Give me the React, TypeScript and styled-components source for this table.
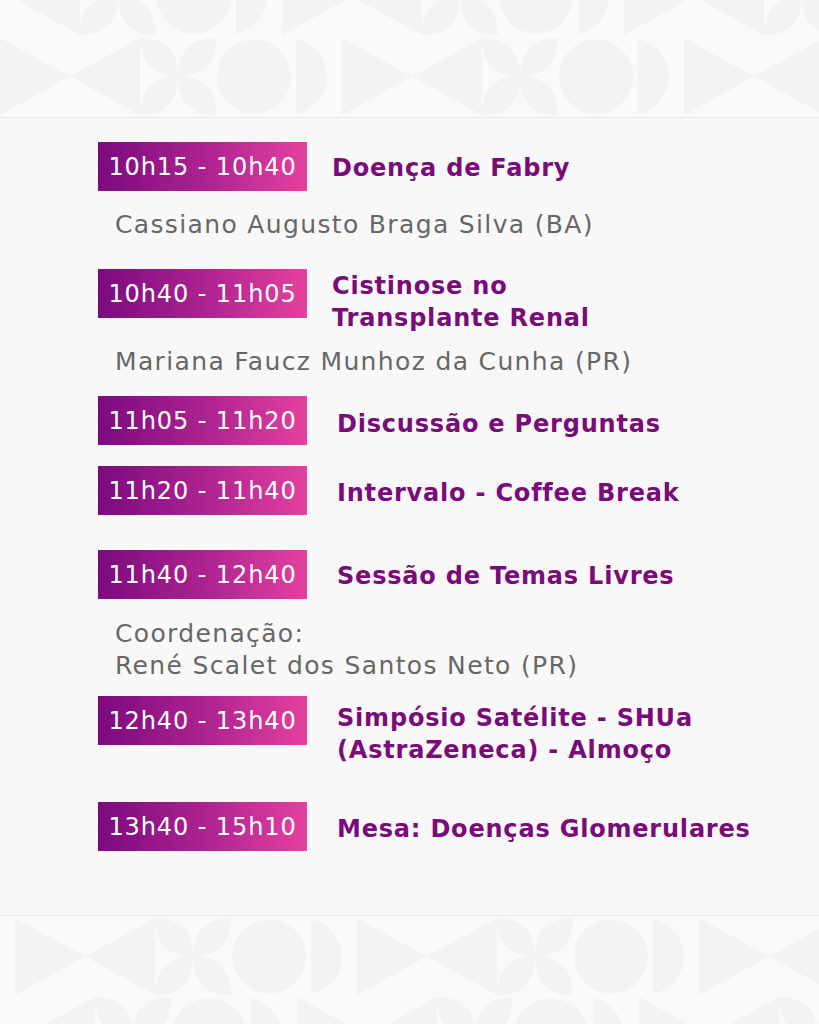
import React from 'react';
import styled, { createGlobalStyle } from 'styled-components';

const GlobalStyle = createGlobalStyle`
  * {
    box-sizing: border-box;
  }
  body {
    margin: 0;
    background: #f9f8f9;
  }
`;

const Page = styled.div`
  width: 819px;
  height: 1024px;
  display: flex;
  flex-direction: column;
  overflow: hidden;
  background: #f9f8f9;
  font-family: 'DejaVu Sans', 'Liberation Sans', sans-serif;
`;

const Band = styled.div<{ $bottom?: boolean }>`
  flex-shrink: 0;
  height: ${(p) => (p.$bottom ? 109 : 118)}px;
  overflow: hidden;
  background: #fafafa;
  border-${(p) => (p.$bottom ? 'top' : 'bottom')}: 1px solid #ece4eb;

  svg {
    display: block;
  }
`;

const Main = styled.main`
  flex: 1;
  display: flex;
  flex-direction: column;
  padding: 24px 0 0 98px;
`;

const Session = styled.section<{ $gap: number }>`
  margin-top: ${(p) => p.$gap}px;
`;

const Row = styled.div`
  display: flex;
  align-items: flex-start;
`;

const Time = styled.div`
  flex-shrink: 0;
  width: 209px;
  height: 49px;
  display: flex;
  align-items: center;
  justify-content: center;
  background: linear-gradient(90deg, #7b0a7e 0%, #b02591 55%, #e5419f 100%);
  color: #ffffff;
  font-size: 24px;
  letter-spacing: 0.9px;
`;

const Title = styled.h2<{ $offset: number; $indent: number }>`
  margin: ${(p) => p.$offset}px 0 0 ${(p) => p.$indent}px;
  color: #790c78;
  font-size: 24px;
  font-weight: 700;
  line-height: 32px;
  letter-spacing: 0.8px;
`;

const Speaker = styled.p<{ $gap: number }>`
  margin: ${(p) => p.$gap}px 0 0 17px;
  color: #676767;
  font-size: 25px;
  line-height: 32px;
  letter-spacing: 1.35px;
`;

type Item = {
  gap: number;
  time: string;
  title: string[];
  offset: number;
  indent: number;
  speaker?: string[];
  speakerGap?: number;
};

const items: Item[] = [
  {
    gap: 0,
    time: '10h15 - 10h40',
    title: ['Doença de Fabry'],
    offset: 10,
    indent: 25,
    speaker: ['Cassiano Augusto Braga Silva (BA)'],
    speakerGap: 18,
  },
  {
    gap: 28,
    time: '10h40 - 11h05',
    title: ['Cistinose no', 'Transplante Renal'],
    offset: 1,
    indent: 25,
    speaker: ['Mariana Faucz Munhoz da Cunha (PR)'],
    speakerGap: 12,
  },
  { gap: 18, time: '11h05 - 11h20', title: ['Discussão e Perguntas'], offset: 12, indent: 30 },
  { gap: 21, time: '11h20 - 11h40', title: ['Intervalo - Coffee Break'], offset: 11, indent: 30 },
  {
    gap: 35,
    time: '11h40 - 12h40',
    title: ['Sessão de Temas Livres'],
    offset: 10,
    indent: 30,
    speaker: ['Coordenação:', 'René Scalet dos Santos Neto (PR)'],
    speakerGap: 19,
  },
  {
    gap: 14,
    time: '12h40 - 13h40',
    title: ['Simpósio Satélite - SHUa', '(AstraZeneca) - Almoço'],
    offset: 6,
    indent: 30,
  },
  { gap: 36, time: '13h40 - 15h10', title: ['Mesa: Doenças Glomerulares'], offset: 11, indent: 30 },
];

const SHAPE = '#f4f2f4';
const H = 77;

const tiles: [string, number][] = [
  ['bow', 140],
  ['flower', 76],
  ['circle', 80],
  ['half', 46],
];

const Tile: React.FC<{ kind: string; x: number; y: number; w: number }> = ({ kind, x, y, w }) => {
  const m = H / 2;
  if (kind === 'bow') {
    return (
      <g fill={SHAPE}>
        <polygon points={`${x},${y} ${x + w / 2},${y + m} ${x},${y + H}`} />
        <polygon points={`${x + w},${y} ${x + w / 2},${y + m} ${x + w},${y + H}`} />
      </g>
    );
  }
  if (kind === 'flower') {
    const c = x + 38;
    const d = y + m;
    return (
      <g fill={SHAPE}>
        <path d={`M${x},${y} Q${c},${y} ${c},${d} Q${x},${d} ${x},${y}Z`} />
        <path d={`M${x + 76},${y} Q${c},${y} ${c},${d} Q${x + 76},${d} ${x + 76},${y}Z`} />
        <path d={`M${x},${y + H} Q${c},${y + H} ${c},${d} Q${x},${d} ${x},${y + H}Z`} />
        <path d={`M${x + 76},${y + H} Q${c},${y + H} ${c},${d} Q${x + 76},${d} ${x + 76},${y + H}Z`} />
      </g>
    );
  }
  if (kind === 'circle') {
    return <circle cx={x + 38} cy={y + m} r={37} fill={SHAPE} />;
  }
  return (
    <path
      d={`M${x},${y + 1} A${w - 6},${m} 0 0 1 ${x},${y + H - 1}Z`}
      fill={SHAPE}
    />
  );
};

const PatternRow: React.FC<{ y: number; shift: number }> = ({ y, shift }) => {
  const out: React.ReactNode[] = [];
  let x = shift;
  let i = 0;
  while (x < 819) {
    const [kind, w] = tiles[i % tiles.length];
    out.push(<Tile key={i} kind={kind} x={x} y={y} w={w} />);
    x += w;
    i += 1;
  }
  return <>{out}</>;
};

const Pattern: React.FC<{ height: number; rows: [number, number][] }> = ({ height, rows }) => (
  <svg width={819} height={height} viewBox={`0 0 819 ${height}`}>
    {rows.map(([y, shift]) => (
      <PatternRow key={y} y={y} shift={shift} />
    ))}
  </svg>
);

const Lines: React.FC<{ lines: string[] }> = ({ lines }) => (
  <>
    {lines.map((line, i) => (
      <React.Fragment key={line}>
        {i > 0 && <br />}
        {line}
      </React.Fragment>
    ))}
  </>
);

const App: React.FC = () => {
  return (
    <>
      <GlobalStyle />
      <Page>
        <Band>
          <Pattern height={117} rows={[[-42, -60], [38, 0]]} />
        </Band>
        <Main>
          {items.map((item) => (
            <Session key={item.time} $gap={item.gap}>
              <Row>
                <Time>{item.time}</Time>
                <Title $offset={item.offset} $indent={item.indent}>
                  <Lines lines={item.title} />
                </Title>
              </Row>
              {item.speaker && (
                <Speaker $gap={item.speakerGap ?? 0}>
                  <Lines lines={item.speaker} />
                </Speaker>
              )}
            </Session>
          ))}
        </Main>
        <Band $bottom>
          <Pattern height={108} rows={[[2, 15], [81, -45]]} />
        </Band>
      </Page>
    </>
  );
};

export default App;
